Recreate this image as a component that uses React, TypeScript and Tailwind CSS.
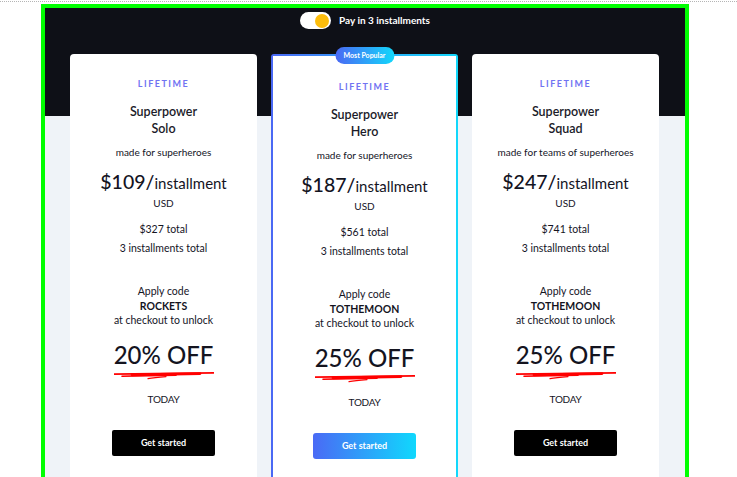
import React from "react";

type Plan = {
  name: string;
  desc: string;
  price: string;
  total: string;
  code: string;
  off: string;
  popular?: boolean;
};

const plans: Plan[] = [
  { name: "Solo", desc: "made for superheroes", price: "$109", total: "$327 total", code: "ROCKETS", off: "20% OFF" },
  { name: "Hero", desc: "made for superheroes", price: "$187", total: "$561 total", code: "TOTHEMOON", off: "25% OFF", popular: true },
  { name: "Squad", desc: "made for teams of superheroes", price: "$247", total: "$741 total", code: "TOTHEMOON", off: "25% OFF" },
];

function Scribble() {
  return (
    <svg width="100" height="10" viewBox="0 0 100 10" className="mt-[1px] block">
      <path d="M0 4.2 C 30 3.6, 60 3.4, 100 2.8" stroke="#ff0000" strokeWidth="1.8" fill="none" strokeLinecap="round" />
      <path d="M18 4.8 C 45 4.3, 70 3.9, 86 3.6" stroke="#ff0000" strokeWidth="2.8" fill="none" strokeLinecap="round" />
      <path d="M8 6.2 C 25 5.8, 45 5.5, 62 5.2" stroke="#ff0000" strokeWidth="1.6" fill="none" strokeLinecap="round" />
      <path d="M34 8.6 C 40 7.8, 46 7.2, 52 6.6" stroke="#ff0000" strokeWidth="1.2" fill="none" strokeLinecap="round" />
    </svg>
  );
}

function CardBody({ p }: { p: Plan }) {
  return (
    <div className={`flex flex-col items-center text-center text-[#14141f] ${p.popular ? "pt-[25px]" : "pt-[24px]"}`}>
      <div className="text-[9px] leading-[12px] font-bold tracking-[1.5px] text-[#7173f2]">LIFETIME</div>
      <div className="mt-[13px] text-[12.5px] leading-[17px] font-semibold text-[#1b1b29]">
        Superpower
        <br />
        {p.name}
      </div>
      <div className="mt-[9px] text-[10px] leading-[12px]">{p.desc}</div>
      <div className="mt-[11px] flex items-baseline leading-[26px]">
        <span className="text-[19.5px] font-medium">{p.price}/</span>
        <span className="text-[15px]">installment</span>
      </div>
      <div className="mt-[1px] text-[10px] leading-[12px]">USD</div>
      <div className="mt-[14px] text-[10.5px] leading-[12px]">{p.total}</div>
      <div className="mt-[7px] text-[10.5px] leading-[12px]">3 installments total</div>
      <div className="mt-[30px] text-[10.5px] leading-[14.5px]">
        <div>Apply code</div>
        <div className="font-bold">{p.code}</div>
        <div>at checkout to unlock</div>
      </div>
      <div className="mt-[13px] text-[24px] leading-[28px] font-medium">{p.off}</div>
      <Scribble />
      <div className="mt-[13px] text-[10px] leading-[12px] tracking-[-0.3px]">TODAY</div>
      <button
        className={`mt-[25px] h-[26px] w-[103px] text-[9px] font-bold text-white ${
          p.popular ? "rounded-[3px] bg-[linear-gradient(to_right,#4a6af5,#10d8fd)]" : "rounded-[2px] bg-black"
        }`}
      >
        Get started
      </button>
    </div>
  );
}

export default function App() {
  return (
    <div className="h-[477px] w-[737px] overflow-hidden bg-white" style={{ fontFamily: "Lato, 'Open Sans', sans-serif" }}>
      <div className="mt-[1px] border-t border-dotted border-[#b5b5b5]" />
      <div className="ml-[41px] mt-[2px] h-[600px] w-[648px] border-4 border-[#00ff00] bg-[linear-gradient(to_bottom,#0e1017_108px,#eff3f8_108px)]">
        <div className="flex items-center justify-center gap-[8px] pt-[4px]">
          <div className="flex h-[17px] w-[31px] items-center justify-end rounded-full bg-white pr-[1.5px]">
            <div className="h-[14px] w-[14px] rounded-full bg-[#fdbd0c]" />
          </div>
          <span className="text-[10px] font-bold text-white">Pay in 3 installments</span>
        </div>
        <div className="mt-[25px] grid grid-cols-3 gap-[14px] pl-[25px] pr-[26px]">
          {plans.map((p) =>
            p.popular ? (
              <div key={p.name} className="relative h-[500px] rounded-t-[3px] bg-[linear-gradient(to_right,#4a68f4,#12d8fb)] p-[2px]">
                <div className="absolute left-1/2 top-[-7px] flex h-[17px] w-[59px] -translate-x-1/2 items-center justify-center rounded-full bg-[linear-gradient(to_right,#4a68f4,#12d8fb)] text-[7px] font-bold text-white">
                  Most Popular
                </div>
                <div className="h-full bg-white">
                  <CardBody p={p} />
                </div>
              </div>
            ) : (
              <div key={p.name} className="h-[500px] rounded-t-[4px] bg-white">
                <CardBody p={p} />
              </div>
            )
          )}
        </div>
      </div>
    </div>
  );
}
